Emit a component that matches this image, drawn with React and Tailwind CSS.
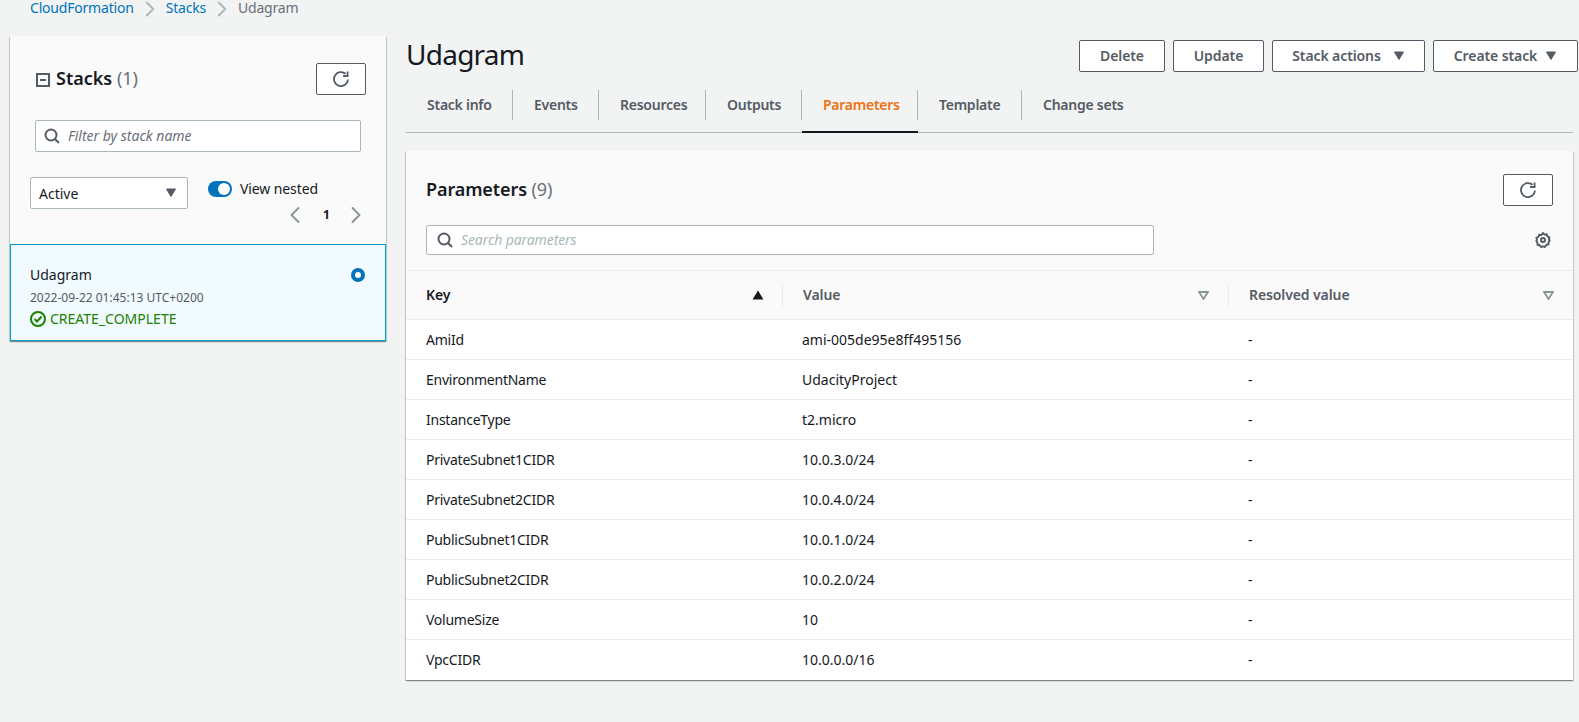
import { ChevronLeft, ChevronRight } from "lucide-react";

const tabs = [
  { label: "Stack info", width: "w-[107px]" },
  { label: "Events", width: "w-[86px]" },
  { label: "Resources", width: "w-[107px]" },
  { label: "Outputs", width: "w-[96px]" },
  { label: "Parameters", width: "w-[116px]", active: true },
  { label: "Template", width: "w-[104px]" },
  { label: "Change sets", width: "w-[140px]", last: true },
];

const params = [
  ["AmiId", "ami-005de95e8ff495156"],
  ["EnvironmentName", "UdacityProject"],
  ["InstanceType", "t2.micro"],
  ["PrivateSubnet1CIDR", "10.0.3.0/24"],
  ["PrivateSubnet2CIDR", "10.0.4.0/24"],
  ["PublicSubnet1CIDR", "10.0.1.0/24"],
  ["PublicSubnet2CIDR", "10.0.2.0/24"],
  ["VolumeSize", "10"],
  ["VpcCIDR", "10.0.0.0/16"],
];

const cardShadow =
  "shadow-[0_1px_1px_0_rgba(0,28,36,0.3),1px_1px_1px_0_rgba(0,28,36,0.15),-1px_1px_1px_0_rgba(0,28,36,0.15)]";

function RefreshIcon() {
  return (
    <svg width="16" height="16" viewBox="0 0 16 16" fill="none" stroke="#545b64" strokeWidth="1.8">
      <path d="M15 8.500A7 7 0 1 1 12.600 2.800" />
      <path d="M14.600 0.500v4.500h-4.500" />
    </svg>
  );
}

function SearchIcon() {
  return (
    <svg width="16" height="16" viewBox="0 0 16 16" fill="none" stroke="#545b64" strokeWidth="2">
      <circle cx="7" cy="7" r="5.500" />
      <path d="M11 11L15 15" />
    </svg>
  );
}

function GearIcon() {
  return (
    <svg width="16" height="16" viewBox="0 0 16 16" fill="none" stroke="#545b64">
      <path d="M8 1l1.500 1.600 2.200-.3.7 2.100 2 1-.6 2.100.9 1-1.200 1.700.1 2.100-2.200.5L10 15l-2-.7-2 .7-1.400-1.700-2.200-.5.1-2.100L1.300 9l.7-1-.6-2.100 2-1 .7-2.100 2.200.3z" strokeWidth="1.900" strokeLinejoin="round" />
      <circle cx="8" cy="8" r="2" strokeWidth="2" />
    </svg>
  );
}

function CaretDown({ color = "#545b64" }) {
  return (
    <svg width="12" height="10" viewBox="0 0 12 10">
      <path d="M1.500 1h9L6 8.500z" fill={color} stroke={color} strokeWidth="1" />
    </svg>
  );
}

function FilterCaret() {
  return (
    <svg width="11" height="9" viewBox="0 0 11 9" fill="none" stroke="#879596" strokeWidth="1.800">
      <path d="M1 1h9L5.500 8z" />
    </svg>
  );
}

function OutlineButton({ children, className = "" }) {
  return (
    <button className={`flex h-8 items-center justify-center rounded-[2px] border border-[#545b64] bg-white text-sm font-semibold tracking-[-0.1px] text-[#545b64] ${className}`}>
      {children}
    </button>
  );
}

function Sidebar() {
  return (
    <aside className={`w-[376px] shrink-0 bg-[#fafafa] ${cardShadow}`}>
      <div className="h-[208px] pt-[27px]">
        <div className="flex items-center justify-between pl-[26px] pr-5">
          <div className="flex items-center">
            <svg width="14" height="14" viewBox="0 0 14 14" fill="none" stroke="#545b64" strokeWidth="2" className="mt-[1px]">
              <path d="M1 1h12v12H1z" />
              <path d="M4 7h6" />
            </svg>
            <h2 className="mb-[3px] ml-[6px] text-lg leading-[26px] font-semibold text-[#16191f]">
              Stacks <span className="font-normal text-[#687078]">(1)</span>
            </h2>
          </div>
          <OutlineButton className="w-[50px]">
            <RefreshIcon />
          </OutlineButton>
        </div>
        <div className="mt-[25px] ml-[25px] flex h-8 w-[326px] items-center rounded-[2px] border border-[#aab7b8] bg-white pl-2">
          <SearchIcon />
          <span className="ml-2 text-sm text-[#687078] italic">Filter by stack name</span>
        </div>
        <div className="mt-[25px] ml-5 flex items-start">
          <div className="flex h-8 w-[158px] items-center justify-between rounded-[2px] border border-[#aab7b8] bg-white pr-[10px] pl-2">
            <span className="pt-[1px] text-sm text-[#16191f]">Active</span>
            <CaretDown />
          </div>
          <div className="ml-5 flex-1">
            <div className="mt-[3px] flex items-center">
              <div className="relative h-4 w-6 rounded-full bg-[#0073bb]">
                <div className="absolute top-[2px] right-[2px] h-3 w-3 rounded-full bg-white" />
              </div>
              <span className="ml-2 pt-[1px] text-sm leading-4 tracking-[-0.1px] text-[#16191f]">View nested</span>
            </div>
            <div className="mt-1 flex items-center justify-end pr-[16px] text-[#879596]">
              <ChevronLeft size={28} strokeWidth={1.6} />
              <span className="mr-[13px] ml-[14px] w-[6px] text-center text-xs font-bold text-[#16191f]">1</span>
              <ChevronRight size={28} strokeWidth={1.6} />
            </div>
          </div>
        </div>
      </div>
      <div className="h-[97px] border border-[#00a1c9] bg-[#f1faff] pt-[19px] pr-[20px] pl-[19px]">
        <div className="flex items-center justify-between">
          <span className="text-sm leading-[22px] text-[#16191f]">Udagram</span>
          <div className="flex h-[14px] w-[14px] items-center justify-center rounded-full bg-[#0073bb]">
            <div className="h-[6px] w-[6px] rounded-full bg-white" />
          </div>
        </div>
        <div className="mt-[2px] text-xs leading-[20px] text-[#545b64]">2022-09-22 01:45:13 UTC+0200</div>
        <div className="flex items-center text-sm leading-[22px] text-[#1d8102]">
          <svg width="16" height="16" viewBox="0 0 16 16" fill="none" stroke="#1d8102" strokeWidth="2">
            <circle cx="8" cy="8" r="7" />
            <path d="M4.500 8l2.500 2.500 4.500-5" />
          </svg>
          <span className="ml-1">CREATE_COMPLETE</span>
        </div>
      </div>
    </aside>
  );
}

function ParametersCard() {
  return (
    <section className={`mt-[18px] bg-white ${cardShadow}`}>
      <div className="h-[120px] border-b border-[#eaeded] bg-[#fafafa] pt-[23px]">
        <div className="flex items-center justify-between pr-5 pl-5">
          <h2 className="mb-[2px] text-lg leading-[30px] font-semibold tracking-[-0.1px] text-[#16191f]">
            Parameters <span className="font-normal text-[#687078]">(9)</span>
          </h2>
          <OutlineButton className="w-[50px]">
            <RefreshIcon />
          </OutlineButton>
        </div>
        <div className="mt-[19px] flex items-center justify-between pr-[22px] pl-5">
          <div className="flex h-[30px] w-[728px] items-center rounded-[2px] border border-[#aab7b8] bg-white pl-[10px]">
            <SearchIcon />
            <span className="ml-[8px] text-sm tracking-[-0.1px] text-[#aab7b8] italic">Search parameters</span>
          </div>
          <GearIcon />
        </div>
      </div>
      <div className="grid h-[49px] grid-cols-[376px_446px_1fr] border-b border-[#eaeded] bg-[#fafafa] text-sm font-semibold tracking-[-0.1px]">
        <div className="flex items-center justify-between pr-[18px] pl-5 text-[#16191f]">
          <span>Key</span>
          <svg width="12" height="10" viewBox="0 0 12 10" fill="#16191f"><path d="M6 0.500L11.500 9.500H0.500z" /></svg>
        </div>
        <div className="my-[12px] flex items-center justify-between border-l border-[#eaeded] pr-[19px] pl-5 text-[#545b64]">
          <span>Value</span>
          <FilterCaret />
        </div>
        <div className="my-[12px] flex items-center justify-between border-l border-[#eaeded] pr-[19px] pl-5 text-[#545b64]">
          <span>Resolved value</span>
          <FilterCaret />
        </div>
      </div>
      {params.map(([key, value], i) => (
        <div
          key={key}
          className={`grid h-10 grid-cols-[376px_446px_1fr] items-center text-sm text-[#16191f] ${i < params.length - 1 ? "border-b border-[#eaeded]" : ""}`}
        >
          <div className="pl-5 tracking-[-0.25px]">{key}</div>
          <div className="pl-5">{value}</div>
          <div className="pl-5">-</div>
        </div>
      ))}
    </section>
  );
}

export default function App() {
  return (
    <div className="h-[722px] w-[1579px] overflow-hidden bg-[#f2f3f3] font-['Noto_Sans',sans-serif]">
      <nav className="flex h-[36px] items-start pt-[1px] pl-[30px] text-sm leading-[14px] tracking-[-0.2px] text-[#0073bb]">
        <span>CloudFormation</span>
        <ChevronRight size={26} strokeWidth={1.7} className="mx-[3px] -mt-[5px] text-[#aab7b8]" />
        <span>Stacks</span>
        <ChevronRight size={26} strokeWidth={1.7} className="mx-[3px] -mt-[5px] text-[#aab7b8]" />
        <span className="text-[#687078]">Udagram</span>
      </nav>
      <div className="flex items-start pl-[10px]">
        <Sidebar />
        <main className="ml-5 w-[1167px]">
          <div className="-mr-[5px] flex items-center justify-between pt-[4px]">
            <h1 className="mb-1 text-[28px] leading-7 tracking-[-0.75px] text-[#16191f]">Udagram</h1>
            <div className="flex gap-2">
              <OutlineButton className="w-[86px]">Delete</OutlineButton>
              <OutlineButton className="w-[91px]">Update</OutlineButton>
              <OutlineButton className="w-[153px] gap-3">
                Stack actions <CaretDown />
              </OutlineButton>
              <OutlineButton className="w-[145px] gap-2">
                Create stack <CaretDown />
              </OutlineButton>
            </div>
          </div>
          <div className="mt-[18px] flex h-[43px] items-start border-b border-[#aab7b8]">
            {tabs.map((tab) => (
              <div key={tab.label} className={`relative h-[30px] ${tab.width} ${tab.last ? "" : "border-r border-[#aab7b8]"} pl-[21px] text-sm leading-[30px] font-semibold tracking-[-0.25px] ${tab.active ? "text-[#ec7211]" : "text-[#545b64]"}`}>
                {tab.label}
                {tab.active && <div className="absolute top-[41px] -right-[1px] left-0 h-[2px] bg-[#16191f]" />}
              </div>
            ))}
          </div>
          <ParametersCard />
        </main>
      </div>
    </div>
  );
}
